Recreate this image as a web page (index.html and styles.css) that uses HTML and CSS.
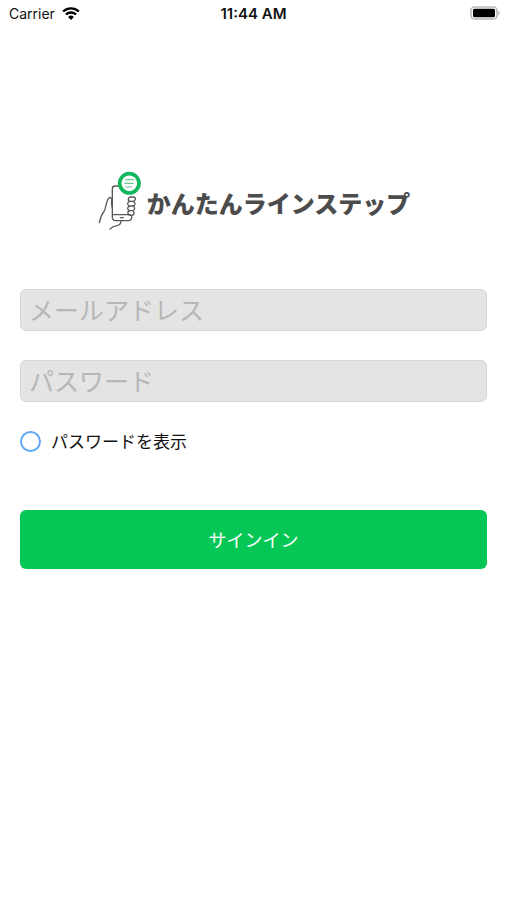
FILE: index.html
```html
<!DOCTYPE html>
<html lang="ja">
<head>
<meta charset="utf-8">
<meta name="viewport" content="width=device-width, initial-scale=1">
<title>かんたんラインステップ</title>
<link rel="stylesheet" href="styles.css">
</head>
<body>
<header class="status">
  <div class="status-carrier">
    <span>Carrier</span>
    <svg class="wifi" viewBox="0 0 18 13" width="18" height="13" aria-hidden="true">
      <path d="M1.1 4.5a11.6 11.6 0 0 1 15.8 0M3.9 7.5a7.5 7.5 0 0 1 10.2 0" fill="none" stroke="#000" stroke-width="2.3"/>
      <path d="M9 13 6.1 9.9a4.2 4.2 0 0 1 5.8 0z"/>
    </svg>
  </div>
  <time class="status-time">11:44 AM</time>
  <svg class="battery" viewBox="0 0 31 14" width="31" height="14" aria-hidden="true">
    <rect x="1" y="1" width="26" height="12" rx="3.5" fill="#fff" stroke="#b9b9b9" stroke-width="1.6"/>
    <rect x="3" y="2.7" width="22" height="8.6" rx="1.5"/>
    <path d="M28.4 4.7q2.6 2.3 0 4.6z" fill="#a8a8a8"/>
  </svg>
</header>
<main class="signin">
  <h1 class="brand">
    <svg class="brand-mark" viewBox="18 15 138 186" width="46" height="62" aria-hidden="true">
      <g fill="none" stroke="#5a5a5a" stroke-width="4" stroke-linecap="round" stroke-linejoin="round">
        <path d="M82 63H72q-8 0-8 8v86q0 10 10 10h38q10 0 10-10v-4M65 149h54M88 158h9"/>
        <path d="M64 128q-4-12-2-24 0-8-7-6-4 2-7 12l-7 26q-12 15-16 37"/>
        <path d="M90 169q0 10-12 13-14 2-21 10"/>
        <path d="M118 96h9q7 1 6 7-1 5-8 6h-8q-6-1-5-7 1-5 6-6"/>
        <path d="M115 110q-6 2-5 7 1 6 7 6h9q6-1 6-7 0-5-6-7"/>
        <path d="M115 124q-6 2-5 7 1 6 7 6h8q6-1 6-7 0-5-5-7"/>
        <path d="M115 138q-6 2-4 7 1 5 7 6h6q6-2 5-8 0-4-4-6"/>
      </g>
      <circle cx="115" cy="55" r="29" fill="#fff" stroke="#12b75d" stroke-width="11"/>
      <path d="M103 44h26M100 55h28M103 66h20" stroke="#66cb91" stroke-width="3.4"/>
    </svg>
    <span class="brand-name">かんたんラインステップ</span>
  </h1>
  <form class="form">
    <input class="field" type="email" placeholder="メールアドレス" aria-label="メールアドレス">
    <input class="field" type="password" placeholder="パスワード" aria-label="パスワード">
    <label class="reveal">
      <input class="reveal-box" type="checkbox">
      <span>パスワードを表示</span>
    </label>
    <button class="submit" type="button">サインイン</button>
  </form>
</main>
</body>
</html>
```
FILE: styles.css
```css
* {
  box-sizing: border-box;
}

body {
  margin: 0;
  background: #fff;
  color: #111;
  font-family: Inter, "Noto Sans CJK JP", sans-serif;
}

.status {
  display: grid;
  grid-template-columns: 1fr auto 1fr;
  align-items: center;
  height: 26px;
  padding: 0 6px;
  font-size: 14px;
}

.status-carrier {
  display: flex;
  align-items: center;
  gap: 7px;
  padding-left: 3px;
}

.status-time {
  font-size: 15px;
  font-weight: 600;
}

.battery {
  justify-self: end;
}

.signin {
  padding: 144px 20px 20px;
}

.brand {
  display: flex;
  align-items: center;
  justify-content: center;
  gap: 4px;
  margin: 0;
  color: #4c4c4c;
  font-family: "Noto Sans CJK JP", sans-serif;
  font-size: 24px;
  font-weight: 900;
  line-height: 36px;
}

.brand-mark {
  flex: none;
}

.brand-name {
  padding-top: 4px;
}

.form {
  display: flex;
  flex-direction: column;
  margin-top: 57px;
  font-family: "Noto Sans CJK JP", sans-serif;
}

.field {
  width: 100%;
  height: 42px;
  margin: 0 0 29px;
  padding: 0 8px 2px;
  border: 1px solid #d6d6d6;
  border-radius: 6px;
  background: #e4e4e4;
  color: #111;
  font-family: inherit;
  font-size: 25px;
  font-weight: 400;
}

.field::placeholder {
  color: #b7b7b7;
  opacity: 1;
}

.reveal {
  display: flex;
  align-items: center;
  align-self: flex-start;
  gap: 10px;
  margin-top: -1px;
  font-size: 17px;
  line-height: 22px;
}

.reveal-box {
  appearance: none;
  width: 21px;
  height: 21px;
  margin: 0;
  border: 2px solid #62a8f8;
  border-radius: 50%;
  background: #fff;
}

.reveal-box:checked {
  background: #62a8f8;
}

.submit {
  height: 59px;
  margin-top: 58px;
  padding: 0 0 2px;
  border: 0;
  border-radius: 6px;
  background: #06c755;
  color: #fff;
  font-family: inherit;
  font-size: 18px;
}
```
